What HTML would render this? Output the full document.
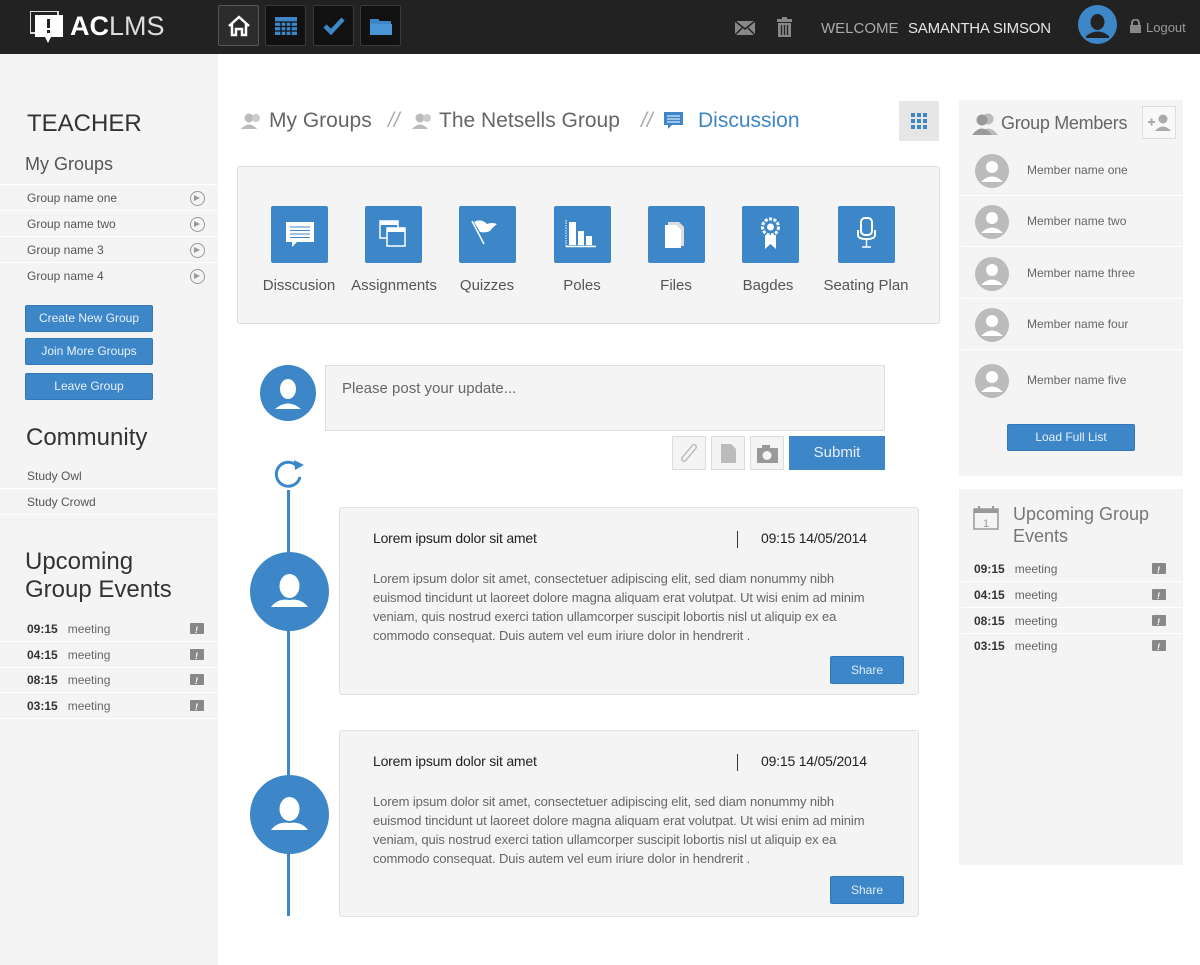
<!DOCTYPE html>
<html><head><meta charset="utf-8"><style>
*{box-sizing:border-box;margin:0;padding:0}
body{width:1200px;height:965px;overflow:hidden;background:#fff;font-family:"Liberation Sans",sans-serif;position:relative;color:#555}
.abs{position:absolute}
.hdr{left:0;top:0;width:1200px;height:54px;background:#222}
.nb{position:absolute;top:5px;width:41px;height:41px;background:#111;border:1px solid #3a3a3a;border-radius:2px;display:flex;align-items:center;justify-content:center}
.left{left:0;top:54px;width:218px;height:911px;background:#f4f4f4}
.row{position:absolute;left:0;width:218px;height:26px;border-bottom:1px solid #fff;font-size:12px;color:#555;padding-left:27px;line-height:26px}
.btn{position:absolute;background:#3d87c9;color:#e8f1fa;font-size:12px;text-align:center;border-radius:2px;border:1px solid #3578b5}
.arr{position:absolute;right:13px;top:6px;width:15px;height:15px;border:1.5px solid #999;border-radius:50%}
.arr:after{content:"";position:absolute;left:3px;top:3px;border-left:6px solid #999;border-top:3.5px solid transparent;border-bottom:3.5px solid transparent}
.ev{position:absolute;left:0;height:26px;border-bottom:1px solid #fff;font-size:12px;line-height:26px;color:#666}
.ev b{color:#333;font-weight:bold;display:inline-block;margin-right:10px}
.evi{position:absolute;top:7px;width:14px;height:11px;background:#888;border-radius:1px}
.evi:after{content:"!";position:absolute;left:5px;top:-6px;color:#fff;font-size:9px;font-weight:bold}
.tool{position:absolute;top:206px;width:57px;height:57px;background:#3d87c9;border-radius:2px}
.tl{position:absolute;top:277px;font-size:15px;color:#555;text-align:center;width:110px}
.card{position:absolute;left:339px;width:580px;background:#f4f4f4;border:1px solid #dde3ea;border-radius:3px}
.card h4{position:absolute;left:33px;top:22px;font-size:14px;color:#222;font-weight:normal;letter-spacing:-0.2px}
.card .dt{position:absolute;left:397px;top:22px;font-size:14px;color:#222;letter-spacing:-0.2px}
.card p{position:absolute;left:33px;top:61px;width:545px;white-space:nowrap;font-size:13px;letter-spacing:-0.1px;line-height:19px;color:#666}
.card .sh{position:absolute;left:490px;width:74px;height:28px;line-height:26px;background:#3d87c9;color:#e0ecf8;font-size:12px;text-align:center;border-radius:2px;border:1px solid #3578b5}
.av{position:absolute;border-radius:50%;background:#3d87c9;overflow:hidden}
.mem{position:absolute;left:962px;width:220px;height:51px;border-bottom:1px solid #fff}
.mem .c{position:absolute;left:13px;top:9px;width:34px;height:34px;border-radius:50%;background:#bbb;overflow:hidden}
.mem span{position:absolute;left:65px;top:18px;font-size:12px;color:#666}
.sq{position:absolute;top:436px;width:34px;height:34px;background:#f4f4f4;border:1px solid #ddd}
.bc{position:absolute;top:109px;font-size:21px;color:#666}
</style></head><body>
<div class="abs hdr">
 <svg class="abs" style="left:30px;top:11px" width="34" height="33" viewBox="0 0 34 33"><rect x="0" y="0" width="28" height="22" fill="none" stroke="#ddd" stroke-width="2"/><rect x="5" y="4" width="28" height="22" fill="#fff"/><polygon points="15,26 21,26 18,32" fill="#fff"/><rect x="17" y="8" width="3" height="9" fill="#222"/><rect x="17" y="19" width="3" height="3" fill="#222"/></svg>
 <div class="abs" style="left:70px;top:11px;font-size:27px;color:#fff"><b style="font-weight:bold">AC</b><span style="font-weight:normal;color:#ddd">LMS</span></div>
 <div class="nb" style="left:218px;background:#2c2c2c;border-color:#555"><svg width="24" height="22" viewBox="0 0 24 22"><path d="M2 11 L12 2 L22 11 M5 9 V20 H9 V14 H15 V20 H19 V9" fill="none" stroke="#fff" stroke-width="2.5"/></svg></div>
 <div class="nb" style="left:265px"><svg width="24" height="20"><rect x="1" y="1" width="22" height="18" fill="#3d87c9"/><path d="M1 6H23M1 10.5H23M1 15H23M7 6V19M12 6V19M17 6V19" stroke="#111" stroke-width="1.3"/></svg></div>
 <div class="nb" style="left:313px"><svg width="24" height="20"><path d="M3 10 L9 16 L21 3" fill="none" stroke="#3d87c9" stroke-width="4.5"/></svg></div>
 <div class="nb" style="left:360px"><svg width="24" height="20"><path d="M1 3H9L11 5H22V19H1Z" fill="#3d87c9"/><path d="M1 8H23V19H1Z" fill="#4a95d6"/></svg></div>
 <svg class="abs" style="left:734px;top:20px" width="22" height="16"><rect x="1" y="1" width="20" height="14" fill="#888"/><path d="M1 1 L11 9 L21 1 M1 15 L8 8 M21 15 L14 8" stroke="#222" stroke-width="1.5" fill="none"/></svg>
 <svg class="abs" style="left:776px;top:17px" width="17" height="21"><rect x="1" y="2" width="15" height="3" fill="#888"/><rect x="6" y="0" width="5" height="3" fill="#888"/><rect x="2" y="6" width="13" height="14" fill="#888"/><path d="M5.5 8V18M8.5 8V18M11.5 8V18" stroke="#222" stroke-width="1.3"/></svg>
 <div class="abs" style="left:821px;top:20px;font-size:15px;color:#aaa">WELCOME</div>
 <div class="abs" style="left:908px;top:20px;font-size:15px;color:#e6e6e6;letter-spacing:-0.2px">SAMANTHA SIMSON</div>
 <div class="av" style="left:1078px;top:5px;width:39px;height:39px"><svg width="39" height="39"><ellipse cx="19.5" cy="17" rx="7" ry="8" fill="#222"/><path d="M8 31 Q19.5 22 31 31 L31 33 H8Z" fill="#222"/></svg></div>
 <svg class="abs" style="left:1129px;top:19px" width="13" height="14"><path d="M3 6V4a3.5 3.5 0 0 1 7 0v2" stroke="#888" stroke-width="2" fill="none"/><rect x="1" y="6" width="11" height="8" fill="#888"/></svg>
 <div class="abs" style="left:1146px;top:20px;font-size:13px;color:#999">Logout</div>
</div>

<div class="abs left"></div>
<div class="abs" style="left:27px;top:110px;font-size:24px;color:#333">TEACHER</div>
<div class="abs" style="left:25px;top:154px;font-size:18px;color:#555">My Groups</div>
<div class="abs" style="left:0;top:184px;width:218px;border-top:1px solid #fff"></div>
<div class="row" style="top:185px">Group name one<i class="arr"></i></div>
<div class="row" style="top:211px">Group name two<i class="arr"></i></div>
<div class="row" style="top:237px">Group name 3<i class="arr"></i></div>
<div class="row" style="top:263px;border:none">Group name 4<i class="arr"></i></div>
<div class="btn" style="left:25px;top:305px;width:128px;height:27px;line-height:24px">Create New Group</div>
<div class="btn" style="left:25px;top:338px;width:128px;height:27px;line-height:25px">Join More Groups</div>
<div class="btn" style="left:25px;top:373px;width:128px;height:27px;line-height:25px">Leave Group</div>
<div class="abs" style="left:26px;top:424px;font-size:24px;color:#333">Community</div>
<div class="row" style="top:463px">Study Owl</div>
<div class="row" style="top:489px">Study Crowd</div>
<div class="abs" style="left:25px;top:548px;font-size:24px;color:#333;line-height:28px">Upcoming<br>Group Events</div>
<div class="ev" style="top:616px;width:218px;padding-left:27px"><b>09:15</b>meeting<i class="evi" style="left:190px"></i></div>
<div class="ev" style="top:642px;width:218px;padding-left:27px"><b>04:15</b>meeting<i class="evi" style="left:190px"></i></div>
<div class="ev" style="top:667px;width:218px;padding-left:27px"><b>08:15</b>meeting<i class="evi" style="left:190px"></i></div>
<div class="ev" style="top:693px;width:218px;padding-left:27px"><b>03:15</b>meeting<i class="evi" style="left:190px"></i></div>

<!-- breadcrumb -->
<svg class="abs" style="left:240px;top:112px" width="24" height="18"><circle cx="9" cy="6" r="4.5" fill="#bbb"/><path d="M1 17Q9 8 17 17Z" fill="#bbb"/><circle cx="16" cy="6" r="4" fill="#ccc"/></svg>
<div class="bc" style="left:269px">My Groups</div>
<div class="bc" style="left:388px;color:#aaa;font-style:italic">//</div>
<svg class="abs" style="left:411px;top:112px" width="24" height="18"><circle cx="9" cy="6" r="4.5" fill="#bbb"/><path d="M1 17Q9 8 17 17Z" fill="#bbb"/><circle cx="16" cy="6" r="4" fill="#ccc"/></svg>
<div class="bc" style="left:439px">The Netsells Group</div>
<div class="bc" style="left:641px;color:#aaa;font-style:italic">//</div>
<svg class="abs" style="left:664px;top:112px" width="20" height="17"><rect x="0" y="0" width="19" height="13" fill="#3d87c9"/><path d="M3 4H16M3 7H16M3 10H16" stroke="#fff"/><polygon points="4,13 8,13 4,17" fill="#3d87c9"/></svg>
<div class="bc" style="left:698px;color:#3d87c9">Discussion</div>
<div class="abs" style="left:899px;top:101px;width:40px;height:40px;background:#e6e6e6"><svg width="40" height="40"><g fill="#3d87c9"><rect x="12" y="12" width="4" height="4"/><rect x="18" y="12" width="4" height="4"/><rect x="24" y="12" width="4" height="4"/><rect x="12" y="18" width="4" height="4"/><rect x="18" y="18" width="4" height="4"/><rect x="24" y="18" width="4" height="4"/><rect x="12" y="24" width="4" height="4"/><rect x="18" y="24" width="4" height="4"/><rect x="24" y="24" width="4" height="4"/></g></svg></div>

<div class="abs" style="left:237px;top:166px;width:703px;height:158px;background:#f4f4f4;border:1px solid #ddd;border-radius:3px"></div>
<div class="tool" style="left:271px"><svg width="57" height="57"><rect x="15" y="16" width="28" height="20" fill="#fff"/><path d="M19 21H39M19 24.5H39M19 28H39M19 31.5H39" stroke="#3d87c9"/><polygon points="21,36 26,36 21,41" fill="#fff"/></svg></div>
<div class="tool" style="left:365px"><svg width="57" height="57"><rect x="15" y="15" width="18" height="17" fill="none" stroke="#fff" stroke-width="1.5"/><rect x="15" y="15" width="18" height="4" fill="#fff"/><rect x="22" y="22" width="18" height="18" fill="#3d87c9" stroke="#fff" stroke-width="1.5"/><rect x="22" y="22" width="18" height="4" fill="#fff"/></svg></div>
<div class="tool" style="left:459px"><svg width="57" height="57"><path d="M13 15L25 38" stroke="#fff" stroke-width="1.5"/><path d="M15 16Q22 12 28 18Q33 16 38 18Q33 22 31 25Q27 27 21 26Z" fill="#fff"/></svg></div>
<div class="tool" style="left:554px"><svg width="57" height="57"><path d="M12 14V40H40" stroke="#fff" stroke-width="1" stroke-dasharray="1.5 1" fill="none"/><rect x="15" y="16" width="7" height="23" fill="#fff"/><rect x="24" y="25" width="6" height="14" fill="#fff"/><rect x="32" y="30" width="6" height="9" fill="#fff"/><path d="M12 40.5H42" stroke="#fff" stroke-width="1.5"/></svg></div>
<div class="tool" style="left:648px"><svg width="57" height="57"><path d="M20 16H31L36 21V40H20Z" fill="#ddd"/><path d="M17 19H28L33 24V42H17Z" fill="#fff"/></svg></div>
<div class="tool" style="left:742px"><svg width="57" height="57"><circle cx="28.5" cy="21" r="8" fill="none" stroke="#fff" stroke-width="3" stroke-dasharray="3 1.5"/><circle cx="28.5" cy="21" r="3.5" fill="#fff"/><path d="M23 29V43L28.5 38L34 43V29Z" fill="#fff"/></svg></div>
<div class="tool" style="left:838px"><svg width="57" height="57"><rect x="23" y="12" width="11" height="17" rx="4" fill="none" stroke="#fff" stroke-width="2"/><path d="M20 24V29Q20 33 28.5 33Q37 33 37 29V24" fill="none" stroke="#fff" stroke-width="2"/><path d="M28.5 33V41M24 41H33" stroke="#fff" stroke-width="1.5"/></svg></div>
<div class="tl" style="left:244px">Disscusion</div>
<div class="tl" style="left:339px">Assignments</div>
<div class="tl" style="left:432px">Quizzes</div>
<div class="tl" style="left:527px">Poles</div>
<div class="tl" style="left:621px">Files</div>
<div class="tl" style="left:713px">Bagdes</div>
<div class="tl" style="left:811px">Seating Plan</div>

<div class="av" style="left:260px;top:365px;width:56px;height:56px"><svg width="56" height="56"><ellipse cx="28" cy="24" rx="8" ry="10" fill="#fff"/><path d="M15 44Q28 33 41 44Z" fill="#fff"/></svg></div>
<div class="abs" style="left:325px;top:365px;width:560px;height:66px;background:#f4f4f4;border:1px solid #e0e0e0"></div>
<div class="abs" style="left:342px;top:380px;font-size:15px;color:#666">Please post your update...</div>
<div class="sq" style="left:672px"><svg width="32" height="32"><path d="M11 22L21 10" stroke="#bbb" stroke-width="6" stroke-linecap="round"/><path d="M11 22L21 10" stroke="#f4f4f4" stroke-width="3" stroke-linecap="round"/></svg></div>
<div class="sq" style="left:711px"><svg width="32" height="32"><path d="M9 7H19L24 12V26H9Z" fill="#bbb"/></svg></div>
<div class="sq" style="left:750px"><svg width="32" height="32"><rect x="6" y="11" width="21" height="15" fill="#999"/><rect x="11" y="8" width="8" height="4" fill="#999"/><circle cx="16" cy="18.5" r="4.5" fill="#f4f4f4"/></svg></div>
<div class="abs" style="left:789px;top:436px;width:96px;height:34px;background:#3d87c9;color:#e6f0fa;font-size:15px;text-align:center;line-height:34px">Submit</div>

<svg class="abs" style="left:272px;top:456px" width="34" height="36"><path d="M24 9A12 12 0 1 0 28 21" fill="none" stroke="#3d87c9" stroke-width="3"/><polygon points="22,4 32,9 23,14" fill="#3d87c9"/></svg>
<div class="abs" style="left:287px;top:490px;width:3px;height:426px;background:#3d87c9"></div>
<div class="av" style="left:250px;top:552px;width:79px;height:79px"><svg width="79" height="79"><ellipse cx="39.5" cy="34" rx="10" ry="12" fill="#fff"/><path d="M21 55Q28 46 39.5 48Q51 46 58 55Z" fill="#fff"/></svg></div>
<div class="av" style="left:250px;top:775px;width:79px;height:79px"><svg width="79" height="79"><ellipse cx="39.5" cy="34" rx="10" ry="12" fill="#fff"/><path d="M21 55Q28 46 39.5 48Q51 46 58 55Z" fill="#fff"/></svg></div>

<div class="card" style="top:507px;height:188px"><h4>Lorem ipsum dolor sit amet</h4><div class="abs" style="left:397px;top:23px;width:1px;height:17px;background:#333"></div><div class="dt" style="left:421px">09:15 14/05/2014</div><p>Lorem ipsum dolor sit amet, consectetuer adipiscing elit, sed diam nonummy nibh<br>euismod tincidunt ut laoreet dolore magna aliquam erat volutpat. Ut wisi enim ad minim<br>veniam, quis nostrud exerci tation ullamcorper suscipit lobortis nisl ut aliquip ex ea<br>commodo consequat. Duis autem vel eum iriure dolor in hendrerit .</p><div class="sh" style="top:148px">Share</div></div>
<div class="card" style="top:730px;height:187px"><h4>Lorem ipsum dolor sit amet</h4><div class="abs" style="left:397px;top:23px;width:1px;height:17px;background:#333"></div><div class="dt" style="left:421px">09:15 14/05/2014</div><p>Lorem ipsum dolor sit amet, consectetuer adipiscing elit, sed diam nonummy nibh<br>euismod tincidunt ut laoreet dolore magna aliquam erat volutpat. Ut wisi enim ad minim<br>veniam, quis nostrud exerci tation ullamcorper suscipit lobortis nisl ut aliquip ex ea<br>commodo consequat. Duis autem vel eum iriure dolor in hendrerit .</p><div class="sh" style="top:145px">Share</div></div>

<!-- right -->
<div class="abs" style="left:959px;top:100px;width:224px;height:376px;background:#f4f4f4"></div>
<svg class="abs" style="left:972px;top:112px" width="28" height="24"><circle cx="16" cy="7" r="5.5" fill="#bbb"/><path d="M6 23Q16 10 26 23Z" fill="#bbb"/><circle cx="10" cy="8" r="5.5" fill="#999"/><path d="M0 23Q10 10 20 23Z" fill="#999"/></svg>
<div class="abs" style="left:1001px;top:113px;font-size:18px;color:#666;letter-spacing:-0.3px">Group Members</div>
<div class="abs" style="left:1142px;top:106px;width:34px;height:33px;border:1px solid #ddd;background:#f8f8f8"><svg width="32" height="31"><path d="M5 15H12M8.5 11.5V18.5" stroke="#aaa" stroke-width="2"/><circle cx="20" cy="12" r="4.5" fill="#aaa"/><path d="M12 24Q20 15 28 24Z" fill="#aaa"/></svg></div>
<div class="mem" style="top:145px"><i class="c"><svg width="34" height="34"><circle cx="17" cy="13" r="6" fill="#fff"/><path d="M6 28Q17 17 28 28Z" fill="#fff"/></svg></i><span>Member name one</span></div>
<div class="mem" style="top:196px"><i class="c"><svg width="34" height="34"><circle cx="17" cy="13" r="6" fill="#fff"/><path d="M6 28Q17 17 28 28Z" fill="#fff"/></svg></i><span>Member name two</span></div>
<div class="mem" style="top:248px"><i class="c"><svg width="34" height="34"><circle cx="17" cy="13" r="6" fill="#fff"/><path d="M6 28Q17 17 28 28Z" fill="#fff"/></svg></i><span>Member name three</span></div>
<div class="mem" style="top:299px"><i class="c"><svg width="34" height="34"><circle cx="17" cy="13" r="6" fill="#fff"/><path d="M6 28Q17 17 28 28Z" fill="#fff"/></svg></i><span>Member name four</span></div>
<div class="mem" style="top:355px;border:none"><i class="c"><svg width="34" height="34"><circle cx="17" cy="13" r="6" fill="#fff"/><path d="M6 28Q17 17 28 28Z" fill="#fff"/></svg></i><span>Member name five</span></div>
<div class="btn" style="left:1007px;top:424px;width:128px;height:27px;line-height:25px">Load Full List</div>

<div class="abs" style="left:959px;top:489px;width:224px;height:376px;background:#f4f4f4"></div>
<svg class="abs" style="left:973px;top:505px" width="27" height="25"><rect x="1" y="4" width="24" height="20" fill="none" stroke="#999" stroke-width="1.5"/><rect x="1" y="4" width="24" height="4" fill="#999"/><path d="M6 1V6M20 1V6" stroke="#999" stroke-width="2"/><text x="10" y="22" font-size="11" fill="#999" font-family="Liberation Sans">1</text></svg>
<div class="abs" style="left:1013px;top:503px;font-size:18px;color:#777;line-height:22px">Upcoming Group<br>Events</div>
<div class="ev" style="top:556px;left:962px;width:220px;padding-left:12px"><b>09:15</b>meeting<i class="evi" style="left:190px"></i></div>
<div class="ev" style="top:582px;left:962px;width:220px;padding-left:12px"><b>04:15</b>meeting<i class="evi" style="left:190px"></i></div>
<div class="ev" style="top:608px;left:962px;width:220px;padding-left:12px"><b>08:15</b>meeting<i class="evi" style="left:190px"></i></div>
<div class="ev" style="top:633px;left:962px;width:220px;padding-left:12px;border:none"><b>03:15</b>meeting<i class="evi" style="left:190px"></i></div>
</body></html>
